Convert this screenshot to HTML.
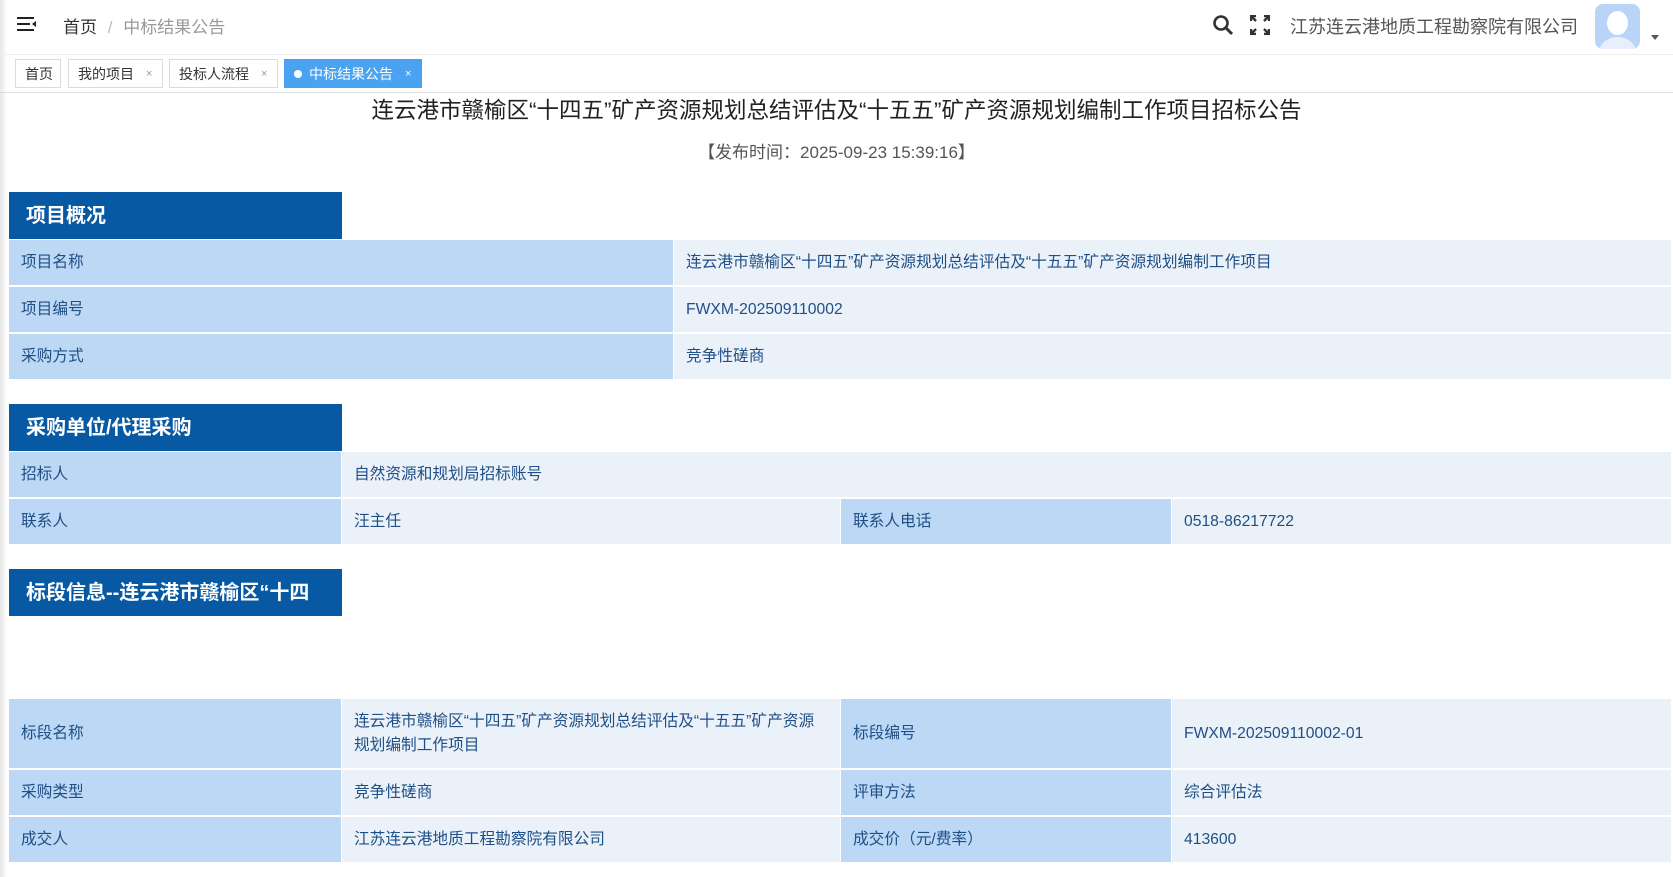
<!DOCTYPE html>
<html><head><meta charset="utf-8"><style>
*{margin:0;padding:0;box-sizing:border-box}
body{width:1673px;height:877px;overflow:hidden;background:#fff;font-family:"Liberation Sans","Noto Sans CJK SC",sans-serif;position:relative}
.a{position:absolute}
.lb{position:absolute;background:#bcd8f5;color:#1f4f86;font-size:15.7px;line-height:24px;display:flex;align-items:center;padding-left:12px}
.vl{position:absolute;background:#eaf1f9;color:#1f4f86;font-size:15.7px;display:flex;align-items:center;padding-left:12px;padding-right:16px;line-height:24px}
.hd{position:absolute;left:9px;width:333px;background:#0759a3;color:#fff;font-size:20px;line-height:24px;font-weight:bold;display:flex;align-items:center;padding-left:17px}
.tab{position:absolute;top:59px;height:29px;border:1px solid #dcdcdc;font-size:14px;color:#333;display:flex;align-items:center;padding-left:9px}
.tab i{font-style:normal;color:#999;font-size:11px;margin-left:12px}
</style></head><body>
<div class="a" style="left:0;top:0;width:7px;height:877px;background:linear-gradient(90deg,#e6e6e6,#fff)"></div>
<div class="a" style="left:0;top:54px;width:1673px;height:1px;background:#eee"></div>
<svg class="a" style="left:17px;top:16px" width="20" height="16" viewBox="0 0 20 16"><rect x="0" y="1" width="17" height="2" fill="#222"/><rect x="0" y="7" width="13" height="2" fill="#222"/><rect x="0" y="13" width="17" height="2" fill="#222"/><path d="M19 5v6l-4-3z" fill="#222"/></svg>
<div class="a" style="left:63px;top:13px;font-size:17px;color:#333">首页 <span style="color:#bbb;margin:0 6px">/</span> <span style="color:#999">中标结果公告</span></div>
<svg class="a" style="left:1212px;top:14px" width="22" height="22" viewBox="0 0 22 22"><circle cx="9" cy="9" r="6.5" stroke="#333" stroke-width="2.6" fill="none"/><path d="M14 14l6 6" stroke="#333" stroke-width="3"/></svg>
<svg class="a" style="left:1250px;top:15px" width="20" height="20" viewBox="0 0 20 20" stroke="#333" stroke-width="2.4" fill="none"><path d="M1 6V1h5M14 1h5v5M19 14v5h-5M6 19H1v-5M2 2l4 4M18 2l-4 4M18 18l-4-4M2 18l4-4"/></svg>
<div class="a" style="left:1290px;top:13px;font-size:18px;color:#555">江苏连云港地质工程勘察院有限公司</div>
<div class="a" style="left:1595px;top:4px;width:45px;height:45px;border-radius:8px;background:#b9d4f7;overflow:hidden"><div class="a" style="left:12px;top:7px;width:21px;height:24px;border-radius:50%;background:#fff"></div><div class="a" style="left:4px;top:33px;width:37px;height:30px;border-radius:50%;background:#e6effb"></div></div>
<div class="a" style="left:1651px;top:35px;border:4px solid transparent;border-top:5px solid #555"></div>
<div class="tab" style="left:15px;width:46px">首页</div>
<div class="tab" style="left:68px;width:95px">我的项目<i>×</i></div>
<div class="tab" style="left:169px;width:109px">投标人流程<i>×</i></div>
<div class="tab" style="left:284px;width:138px;background:#4aa3f1;border-color:#4aa3f1;color:#fff"><span style="width:8px;height:8px;border-radius:50%;background:#fff;margin-right:7px"></span>中标结果公告<i style="color:#fff">×</i></div>
<div class="a" style="left:0;top:92px;width:1673px;height:1px;background:#ddd"></div>
<div class="a" style="left:0;top:93px;width:1673px;text-align:center;font-size:22.5px;color:#222">连云港市赣榆区“十四五”矿产资源规划总结评估及“十五五”矿产资源规划编制工作项目招标公告</div>
<div class="a" style="left:0;top:138px;width:1673px;text-align:center;font-size:17px;color:#555">【发布时间：2025-09-23 15:39:16】</div>

<div class="hd" style="top:192px;height:47px">项目概况</div>
<div class="lb" style="left:9px;top:240px;width:664px;height:45px">项目名称</div><div class="vl" style="left:674px;top:240px;width:997px;height:45px">连云港市赣榆区“十四五”矿产资源规划总结评估及“十五五”矿产资源规划编制工作项目</div>
<div class="lb" style="left:9px;top:287px;width:664px;height:45px">项目编号</div><div class="vl" style="left:674px;top:287px;width:997px;height:45px">FWXM-202509110002</div>
<div class="lb" style="left:9px;top:334px;width:664px;height:45px">采购方式</div><div class="vl" style="left:674px;top:334px;width:997px;height:45px">竞争性磋商</div>

<div class="hd" style="top:404px;height:47px">采购单位/代理采购</div>
<div class="lb" style="left:9px;top:452px;width:332px;height:45px">招标人</div><div class="vl" style="left:342px;top:452px;width:1329px;height:45px">自然资源和规划局招标账号</div>
<div class="lb" style="left:9px;top:499px;width:332px;height:45px">联系人</div><div class="vl" style="left:342px;top:499px;width:498px;height:45px">汪主任</div>
<div class="lb" style="left:841px;top:499px;width:330px;height:45px">联系人电话</div><div class="vl" style="left:1172px;top:499px;width:499px;height:45px">0518-86217722</div>

<div class="hd" style="top:569px;height:47px">标段信息--连云港市赣榆区“十四</div>
<div class="lb" style="left:9px;top:699px;width:332px;height:69px">标段名称</div><div class="vl" style="left:342px;top:699px;width:498px;height:69px;padding-right:20px">连云港市赣榆区“十四五”矿产资源规划总结评估及“十五五”矿产资源规划编制工作项目</div>
<div class="lb" style="left:841px;top:699px;width:330px;height:69px">标段编号</div><div class="vl" style="left:1172px;top:699px;width:499px;height:69px">FWXM-202509110002-01</div>
<div class="lb" style="left:9px;top:770px;width:332px;height:45px">采购类型</div><div class="vl" style="left:342px;top:770px;width:498px;height:45px">竞争性磋商</div>
<div class="lb" style="left:841px;top:770px;width:330px;height:45px">评审方法</div><div class="vl" style="left:1172px;top:770px;width:499px;height:45px">综合评估法</div>
<div class="lb" style="left:9px;top:817px;width:332px;height:45px">成交人</div><div class="vl" style="left:342px;top:817px;width:498px;height:45px">江苏连云港地质工程勘察院有限公司</div>
<div class="lb" style="left:841px;top:817px;width:330px;height:45px">成交价（元/费率）</div><div class="vl" style="left:1172px;top:817px;width:499px;height:45px">413600</div>
</body></html>
